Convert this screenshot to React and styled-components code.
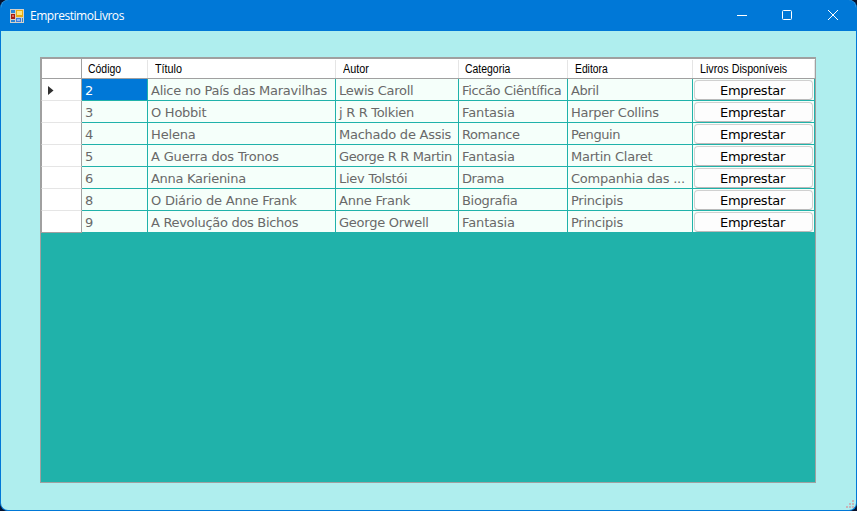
import React from "react";
import styled, { createGlobalStyle } from "styled-components";

const GlobalStyle = createGlobalStyle`
  * { box-sizing: border-box; }
  body { margin: 0; background: #06122e; overflow: hidden; }
`;

const Window = styled.div`
  display: flex;
  flex-direction: column;
  width: 857px;
  height: 511px;
  background: #afeeee;
  border: 1px solid #0078d7;
  border-top: 0;
  border-radius: 8px;
  overflow: hidden;
`;

const TitleBar = styled.header`
  display: flex;
  align-items: center;
  flex: 0 0 31px;
  margin: 0 -1px;
  padding-left: 10px;
  background: #0078d7;
`;

const Title = styled.h1`
  flex: 1;
  margin: 0 0 0 6px;
  font: 400 12px/16px "Open Sans", sans-serif;
  letter-spacing: -0.46px;
  color: #fff;
`;

const Controls = styled.div`
  display: flex;
  height: 31px;
`;

const ControlButton = styled.button`
  display: grid;
  place-items: center;
  width: ${(p) => p.$width}px;
  height: 31px;
  padding: 0 0 1px;
  border: 0;
  background: transparent;
`;

const Client = styled.main`
  position: relative;
  flex: 1;
  padding: 26px 40px 27px 39px;
`;

const Grid = styled.div`
  height: 426px;
  background: #20b2aa;
  border: 1px solid #a0a0a0;
`;

const Row = styled.div`
  display: grid;
  grid-template-columns: 41px 66px 188px 123px 109px 125px 122px;
  grid-template-rows: ${(p) => (p.$head ? 21 : 22)}px;
`;

const RowHeader = styled.div`
  display: flex;
  align-items: center;
  padding: 2px 0 0 6px;
  background: #fff;
  border-left: 1px solid #a0a0a0;
  border-right: 1px solid #a0a0a0;
  border-top: ${(p) => (p.$head ? "1px solid #a0a0a0" : "0")};
  border-bottom: 1px solid ${(p) => (p.$edge ? "#a0a0a0" : "#e5e5e5")};
`;

const HeaderCell = styled.div`
  padding-left: ${(p) => p.$inset || 7}px;
  background: linear-gradient(#e5e5e5, #e5e5e5) right bottom / 1px 18px no-repeat #fff;
  border-top: 1px solid #a0a0a0;
  border-bottom: 1px solid #a0a0a0;
`;

const HeaderLabel = styled.span`
  display: block;
  width: max-content;
  font: 400 12px/20px "Liberation Sans", Arial, sans-serif;
  transform: scaleX(${(p) => p.$stretch});
  transform-origin: left;
  white-space: nowrap;
  color: #000;
`;

const Cell = styled.div`
  padding-left: ${(p) => (p.$button ? 0 : 3)}px;
  background: ${(p) => (p.$selected ? "#0078d7" : "#f5fffa")};
  border-right: 1px solid #20b2aa;
  border-bottom: 1px solid #20b2aa;
  font: 400 13px/23px "DejaVu Sans", Verdana, sans-serif;
  letter-spacing: ${(p) => p.$spacing || 0}px;
  white-space: nowrap;
  color: ${(p) => (p.$selected ? "#fff" : "#696969")};
`;

const LendButton = styled.button`
  display: block;
  width: 119px;
  height: 20px;
  margin: 1px 0 0 1px;
  padding: 1px 2px 0 0;
  background: #fdfdfd;
  border: 1px solid #d0d0d0;
  border-bottom-color: #bababa;
  border-radius: 4px;
  font: 400 13px/17px "DejaVu Sans", Verdana, sans-serif;
  letter-spacing: -0.25px;
  color: #000;
`;

const Grip = styled.svg`
  position: absolute;
  right: 1px;
  bottom: 1px;
`;

const headers = [
  ["Código", 0.87, 6],
  ["Título", 0.9],
  ["Autor", 0.9],
  ["Categoria", 0.87, 6],
  ["Editora", 0.86],
  ["Livros Disponíveis", 0.895],
];

// Each entry is a cell text with its tracking.
const books = [
  [["2", 0], ["Alice no País das Maravilhas", -0.25], ["Lewis Caroll", -0.25], ["Ficcão Ciêntífica", -0.36], ["Abril", -0.4]],
  [["3", 0], ["O Hobbit", -0.25], ["j R R Tolkien", -0.3], ["Fantasia", -0.12], ["Harper Collins", -0.28]],
  [["4", 0], ["Helena", -0.15], ["Machado de Assis", -0.25], ["Romance", -0.4], ["Penguin", -0.4]],
  [["5", 0], ["A Guerra dos Tronos", -0.16], ["George R R Martin", -0.38], ["Fantasia", -0.12], ["Martin Claret", -0.23]],
  [["6", 0], ["Anna Karienina", -0.28], ["Liev Tolstói", -0.25], ["Drama", -0.4], ["Companhia das ...", -0.22]],
  [["8", 0], ["O Diário de Anne Frank", -0.22], ["Anne Frank", -0.2], ["Biografia", -0.3], ["Principis", -0.25]],
  [["9", 0], ["A Revolução dos Bichos", -0.31], ["George Orwell", -0.25], ["Fantasia", -0.12], ["Principis", -0.25]],
];

function AppIcon() {
  return (
    <svg width="14" height="14" viewBox="0 0 14 14" shapeRendering="crispEdges">
      <rect width="14" height="14" fill="#d4d0c8" />
      <rect x="1" y="1" width="4" height="3" fill="#2a86d8" />
      <rect x="1" y="5" width="4" height="5" fill="#a81c10" />
      <rect x="2" y="6" width="2" height="2" fill="#e06858" />
      <rect x="6" y="1" width="7" height="7" fill="#e8ac10" />
      <rect x="7" y="2" width="5" height="4" fill="#ffe480" />
      <rect x="1" y="11" width="4" height="2" fill="#2a86d8" />
      <rect x="6" y="9" width="5" height="4" fill="#3c7ce0" />
      <rect x="7" y="10" width="3" height="2" fill="#8ab8f8" />
      <rect x="12" y="9" width="1" height="4" fill="#2a86d8" />
    </svg>
  );
}

export default function App() {
  return (
    <>
      <GlobalStyle />
      <Window>
        <TitleBar>
          <AppIcon />
          <Title>EmprestimoLivros</Title>
          <Controls>
            <ControlButton $width={46} aria-label="Minimizar">
              <svg width="10" height="10"><path d="M0 5.5h10" stroke="#fff" /></svg>
            </ControlButton>
            <ControlButton $width={44} aria-label="Maximizar">
              <svg width="10" height="10"><rect x=".5" y=".5" width="9" height="9" rx="1" fill="none" stroke="#fff" /></svg>
            </ControlButton>
            <ControlButton $width={48} aria-label="Fechar">
              <svg width="10" height="10"><path d="M0 0l10 10M10 0L0 10" stroke="#fff" /></svg>
            </ControlButton>
          </Controls>
        </TitleBar>
        <Client>
          <Grid>
            <Row $head>
              <RowHeader $head $edge />
              {headers.map(([label, stretch, inset]) => (
                <HeaderCell key={label} $inset={inset}>
                  <HeaderLabel $stretch={stretch}>{label}</HeaderLabel>
                </HeaderCell>
              ))}
            </Row>
            {books.map((book, i) => (
              <Row key={i}>
                <RowHeader $edge={i === books.length - 1}>
                  {i === 0 && (
                    <svg width="6" height="9"><path d="M0 0l5.5 4.5L0 9z" fill="#303030" /></svg>
                  )}
                </RowHeader>
                {book.map(([text, spacing], c) => (
                  <Cell key={c} $spacing={spacing} $selected={i === 0 && c === 0}>{text}</Cell>
                ))}
                <Cell $button>
                  <LendButton>Emprestar</LendButton>
                </Cell>
              </Row>
            ))}
          </Grid>
          <Grip width="9" height="9" fill="#c8b4b8" shapeRendering="crispEdges">
            <path d="M6 0h2v2h-2zM3 3h2v2h-2zM6 3h2v2h-2zM0 6h2v2h-2zM3 6h2v2h-2zM6 6h2v2h-2z" />
          </Grip>
        </Client>
      </Window>
    </>
  );
}
